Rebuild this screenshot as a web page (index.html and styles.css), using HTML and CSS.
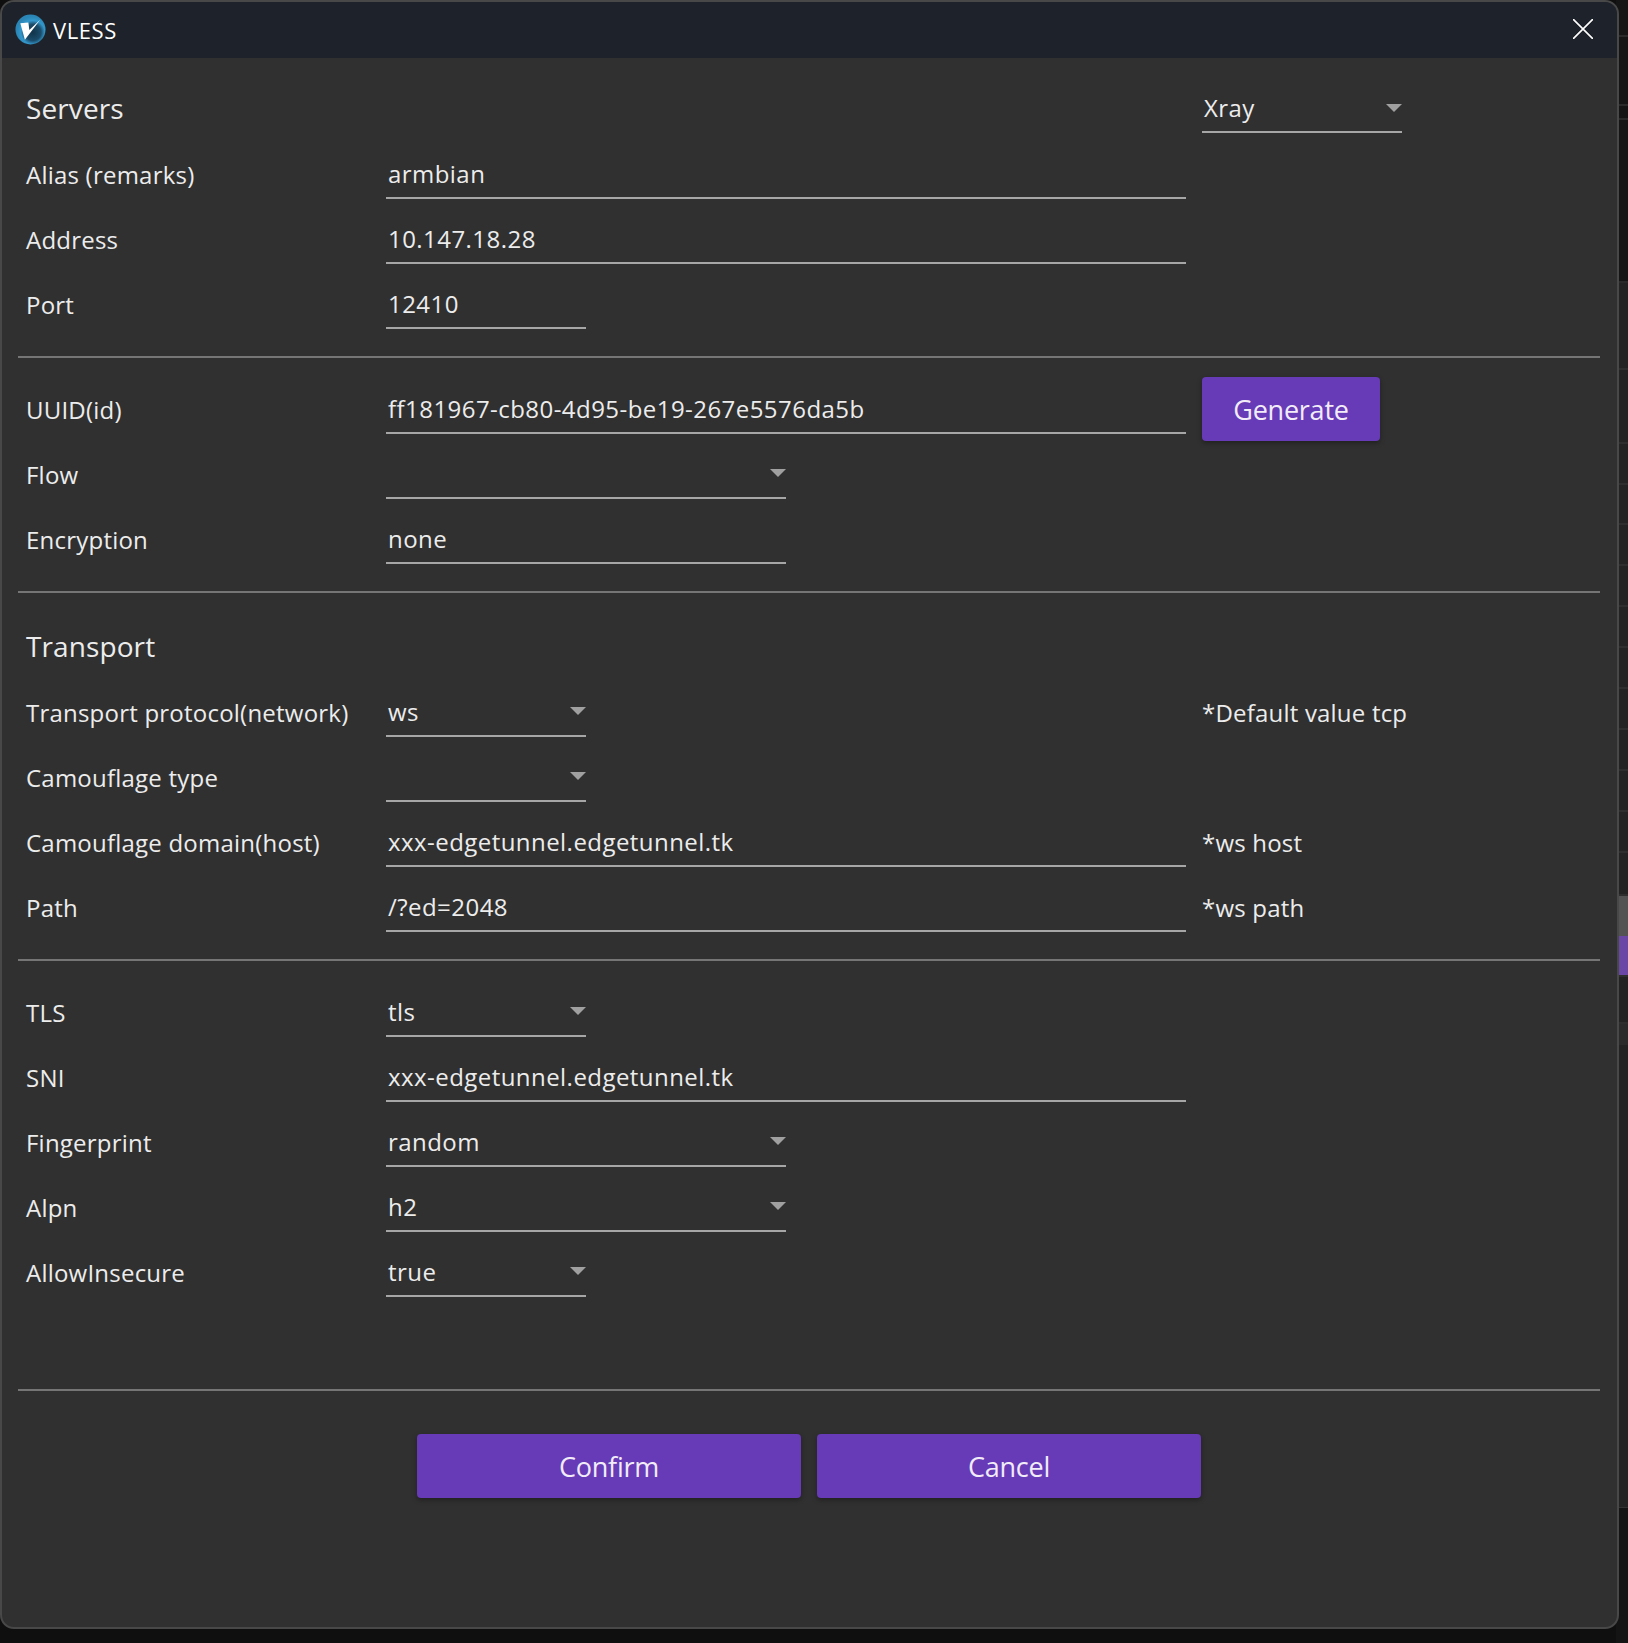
FILE: index.html
```html
<!DOCTYPE html>
<html lang="en">
<head>
<meta charset="utf-8">
<title>VLESS</title>
<link rel="stylesheet" href="styles.css">
</head>
<body>
<div class="backdrop">
  <div class="strip">
    <div class="band dark" style="height:37px"></div>
    <div class="band dark" style="height:69px"></div>
    <div class="band dark" style="height:14px"></div>
    <div class="band dark" style="height:163px"></div>
    <div class="band" style="height:87px"></div>
    <div class="band" style="height:74px"></div>
    <div class="band" style="height:41px"></div>
    <div class="band" style="height:40px"></div>
    <div class="band" style="height:41px"></div>
    <div class="band" style="height:41px"></div>
    <div class="band" style="height:41px"></div>
    <div class="band" style="height:41px"></div>
    <div class="band" style="height:41px"></div>
    <div class="band" style="height:41px"></div>
    <div class="band" style="height:41px"></div>
    <div class="band" style="height:41px"></div>
    <div class="band" style="height:43px"></div>
    <div class="band grey" style="height:40px"></div>
    <div class="band purple" style="height:41px"></div>
    <div class="band" style="height:47px"></div>
    <div class="band lighter" style="height:21px"></div>
    <div class="band plain" style="height:463px"></div>
    <div class="band black" style="height:135px"></div>
  </div>
</div>

<main class="dialog">
  <header class="titlebar">
    <svg class="logo" viewBox="0 0 32 32" aria-hidden="true">
      <defs>
        <radialGradient id="logoDisc" cx="58%" cy="60%" r="54%">
          <stop offset="0" stop-color="#12344a"/>
          <stop offset=".5" stop-color="#1b4c6a"/>
          <stop offset=".74" stop-color="#3397cb"/>
          <stop offset="1" stop-color="#2a86b6"/>
        </radialGradient>
      </defs>
      <circle cx="16" cy="16" r="15.5" fill="url(#logoDisc)"/>
      <path d="M5.5 9.5L13.8 8.8L14.8 16.5L26 6L10.2 26.5Z" fill="#fff"/>
    </svg>
    <span class="title">VLESS</span>
    <svg class="close" viewBox="0 0 20 20" aria-hidden="true">
      <path d="M0 0L20 20M20 0L0 20" stroke="#fff" stroke-width="1.6" fill="none"/>
    </svg>
  </header>

  <form class="form">
    <div class="row">
      <span class="heading wide-cell">Servers</span>
      <div class="field select w200 raised"><span>Xray</span><i class="arrow"></i></div>
    </div>
    <div class="row"><label>Alias (remarks)</label><div class="field w800"><span>armbian</span></div></div>
    <div class="row"><label>Address</label><div class="field w800"><span>10.147.18.28</span></div></div>
    <div class="row"><label>Port</label><div class="field w200"><span>12410</span></div></div>
    <hr class="rule">
    <div class="row"><label>UUID(id)</label><div class="field w800"><span>ff181967-cb80-4d95-be19-267e5576da5b</span></div><button type="button" class="btn generate">Generate</button></div>
    <div class="row"><label>Flow</label><div class="field select w400"><span></span><i class="arrow"></i></div></div>
    <div class="row"><label>Encryption</label><div class="field w400"><span>none</span></div></div>
    <hr class="rule">
    <div class="row tall"><span class="heading">Transport</span></div>
    <div class="row"><label>Transport protocol(network)</label><div class="field select w200"><span>ws</span><i class="arrow"></i></div><span class="spacer200"></span><span class="note">*Default value tcp</span></div>
    <div class="row"><label>Camouflage type</label><div class="field select w200"><span></span><i class="arrow"></i></div></div>
    <div class="row"><label>Camouflage domain(host)</label><div class="field w800"><span>xxx-edgetunnel.edgetunnel.tk</span></div><span class="note">*ws host</span></div>
    <div class="row"><label>Path</label><div class="field w800"><span>/?ed=2048</span></div><span class="note">*ws path</span></div>
    <hr class="rule">
    <div class="row"><label>TLS</label><div class="field select w200"><span>tls</span><i class="arrow"></i></div></div>
    <div class="row"><label>SNI</label><div class="field w800"><span>xxx-edgetunnel.edgetunnel.tk</span></div></div>
    <div class="row"><label>Fingerprint</label><div class="field select w400"><span>random</span><i class="arrow"></i></div></div>
    <div class="row"><label>Alpn</label><div class="field select w400"><span>h2</span><i class="arrow"></i></div></div>
    <div class="row"><label>AllowInsecure</label><div class="field select w200"><span>true</span><i class="arrow"></i></div></div>
    <hr class="rule last">
    <div class="actions">
      <button type="button" class="btn wide">Confirm</button>
      <button type="button" class="btn wide">Cancel</button>
    </div>
  </form>
</main>
</body>
</html>
```
FILE: styles.css
```css
* { box-sizing: border-box; }
html, body { margin: 0; height: 100%; }
body {
  width: 1628px;
  height: 1643px;
  overflow: hidden;
  position: relative;
  background: #0f0f0f;
  font-family: "Open Sans", "Noto Sans", "Liberation Sans", sans-serif;
  color: #ececec;
}

.backdrop { display: flex; justify-content: flex-end; height: 100%; }
.strip { width: 12px; display: flex; flex-direction: column; }
.band { background: #232323; border-bottom: 2px solid #2e2e2e; flex: none; }
.band.dark { background: #151515; border-bottom-color: #2a2a2a; }
.band.grey { background: #535353; border-bottom: 0; }
.band.purple { background: #6a46a6; border-bottom: 2px solid #2e2e2e; }
.band.lighter { background: #2b2b2b; border-bottom: 0; }
.band.plain { background: #232323; border-bottom: 1px solid #333; }
.band.black { background: #141414; border-bottom: 0; }

.dialog {
  position: absolute;
  left: 0;
  top: 0;
  width: 1619px;
  height: 1629px;
  background: #303030;
  border: 2px solid #484848;
  border-radius: 14px;
  overflow: hidden;
}

.titlebar {
  height: 56px;
  background: #1e222a;
  display: flex;
  align-items: center;
  padding: 0 24px 0 13px;
}
.logo { width: 31px; height: 31px; flex: none; margin: 0 7px 2px 0; }
.title { font-size: 22px; color: #fff; letter-spacing: .6px; }
.close { width: 20px; height: 20px; margin: 0 0 2px auto; }

.form { display: flex; flex-direction: column; padding: 19px 17px 0 16px; }
.row {
  height: 65px;
  display: flex;
  align-items: center;
  padding-left: 8px;
  flex: none;
}
.row.tall { height: 68px; }
.row label { width: 360px; flex: none; font-size: 24px; letter-spacing: .22px; }
.heading { font-size: 28px; letter-spacing: .1px; }
.row > .heading.wide-cell { width: 1176px; flex: none; margin-top: -4px; }
.spacer200 { width: 600px; flex: none; }

.field {
  height: 48px;
  display: flex;
  align-items: center;
  justify-content: space-between;
  flex: none;
  padding-left: 2px;
  border-bottom: 2px solid #a6a6a6;
  font-size: 24px;
  letter-spacing: .45px;
  white-space: nowrap;
}
.field.raised { height: 46px; }
.field.raised > span { margin-bottom: 2px; }
.w200 { width: 200px; }
.w400 { width: 400px; }
.w800 { width: 800px; }
.arrow {
  width: 0;
  height: 0;
  margin-bottom: 1px;
  border-left: 8px solid transparent;
  border-right: 8px solid transparent;
  border-top: 8px solid #a0a0a0;
}

.note { font-size: 24px; letter-spacing: .2px; margin-left: 16px; white-space: nowrap; }

.rule {
  height: 2px;
  margin: 19px 0;
  border: 0;
  background: #757575;
}
.rule.last { margin: 84px 0 43px; }

.btn {
  height: 64px;
  border: 0;
  border-radius: 4px;
  background: #673ab7;
  color: #f1ecf8;
  font: inherit;
  font-size: 27px;
  letter-spacing: -.25px;
  box-shadow: 0 2px 5px rgba(0, 0, 0, .35);
}
.generate { width: 178px; margin: 0 0 1px 16px; }
.actions { display: flex; justify-content: center; gap: 16px; }
.wide { width: 384px; }
```
